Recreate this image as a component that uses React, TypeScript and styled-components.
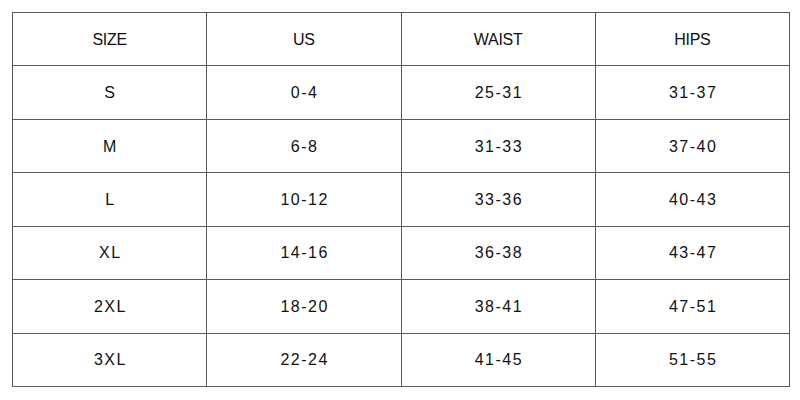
import styled, { createGlobalStyle } from "styled-components";

const GlobalStyle = createGlobalStyle`
  html, body {
    margin: 0;
    padding: 0;
    background: #ffffff;
  }
  body {
    font-family: "Liberation Sans", Arial, sans-serif;
    color: #111;
  }
`;

const headers = ["SIZE", "US", "WAIST", "HIPS"];

const rows = [
  ["S", "0-4", "25-31", "31-37"],
  ["M", "6-8", "31-33", "37-40"],
  ["L", "10-12", "33-36", "40-43"],
  ["XL", "14-16", "36-38", "43-47"],
  ["2XL", "18-20", "38-41", "47-51"],
  ["3XL", "22-24", "41-45", "51-55"],
];

const App = () => {
  return (
    <Page>
      <GlobalStyle />
      <SizeTable>
        <thead>
          <Row>
            {headers.map((h) => (
              <HeadCell key={h}>{h}</HeadCell>
            ))}
          </Row>
        </thead>
        <tbody>
          {rows.map((r) => (
            <Row key={r[0]}>
              {r.map((v, i) => (
                <Cell key={i}>{v}</Cell>
              ))}
            </Row>
          ))}
        </tbody>
      </SizeTable>
    </Page>
  );
};

export default App;

const Page = styled.div`
  width: 800px;
  height: 400px;
  padding: 12px 0 0 12px;
  box-sizing: border-box;
`;

const SizeTable = styled.table`
  width: 778px;
  height: 375px;
  border-collapse: collapse;
  table-layout: fixed;
  border: 1px solid #222;
`;

const Row = styled.tr`
  height: 53.4px;
`;

const HeadCell = styled.th`
  border: 1px solid #5a5a5a;
  font-weight: 400;
  font-size: 16px;
  letter-spacing: -0.3px;
  text-align: center;
  vertical-align: middle;
  padding: 1px 0 0;
`;

const Cell = styled.td`
  border: 1px solid #5a5a5a;
  font-size: 16px;
  letter-spacing: 1.5px;
  text-indent: 1.5px;
  text-align: center;
  vertical-align: middle;
  padding: 1px 0 0;
`;
